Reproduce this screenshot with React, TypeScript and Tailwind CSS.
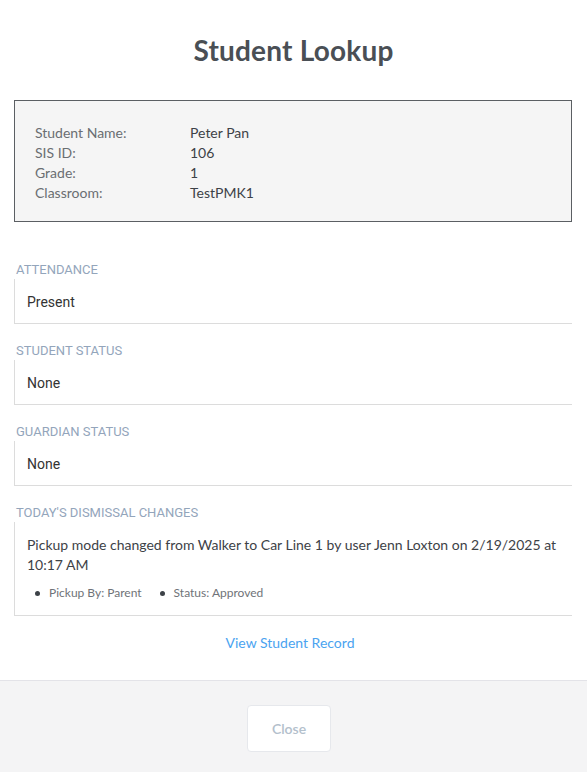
import React from "react";

const geo = "font-['Lato','Noto_Sans',sans-serif]";
const rob = "font-['Roboto','Liberation_Sans',sans-serif]";

const info = [
  { label: "Student Name:", value: "Peter Pan" },
  { label: "SIS ID:", value: "106" },
  { label: "Grade:", value: "1" },
  { label: "Classroom:", value: "TestPMK1" },
];

const Section = ({ title, children, first }: { title: string; children: React.ReactNode; first?: boolean }) => (
  <div className={first ? "mt-[40px]" : "mt-[19px]"}>
    <div className={`${rob} text-[13px] leading-[16px] uppercase text-[#93a5bb] pl-[2px]`}>{title}</div>
    <div className="mt-[1px] border-l border-b border-[#dcdcdc] pl-[12px] pr-[12px] pt-[13px] pb-[11px]">
      {children}
    </div>
  </div>
);

export default function App() {
  return (
    <div className={`w-[587px] min-h-[772px] bg-white flex flex-col ${geo}`}>
      <div className="h-[100px] flex items-center justify-center">
        <h1 className="text-[28px] leading-[36px] font-bold text-[#4a4f55] tracking-[0.2px]">Student Lookup</h1>
      </div>

      <div className="px-[14px] pr-[15px]">
        <div className="border border-[#5b5f63] bg-[#f5f5f5] pl-[20px] pt-[22px] pb-[18px]">
          {info.map((r) => (
            <div key={r.label} className="flex text-[14px] leading-[20px]">
              <div className="w-[155px] text-[#6a6e72]">{r.label}</div>
              <div className="text-[#3d4247]">{r.value}</div>
            </div>
          ))}
        </div>

        <Section title="Attendance" first>
          <div className={`${rob} text-[14px] leading-[20px] text-[#333]`}>Present</div>
        </Section>
        <Section title="Student Status">
          <div className={`${rob} text-[14px] leading-[20px] text-[#333]`}>None</div>
        </Section>
        <Section title="Guardian Status">
          <div className={`${rob} text-[14px] leading-[20px] text-[#333]`}>None</div>
        </Section>
        <Section title="Today's Dismissal Changes">
          <div>
            <p className="text-[14px] leading-[20px] text-[#3d4247]">
              Pickup mode changed from Walker to Car Line 1 by user Jenn Loxton on 2/19/2025 at 10:17 AM
            </p>
            <ul className="mt-[8px] mb-[1px] flex items-center pl-[8px] text-[12px] leading-[20px] text-[#6f7378]">
              <li className="flex items-center gap-[9px]">
                <span className="w-[5px] h-[5px] rounded-full bg-[#3d4247]" />
                Pickup By: Parent
              </li>
              <li className="flex items-center gap-[9px] ml-[18px]">
                <span className="w-[5px] h-[5px] rounded-full bg-[#3d4247]" />
                Status: Approved
              </li>
            </ul>
          </div>
        </Section>

        <div className="mt-[17px] mb-[27px] pr-[6px] text-center text-[14px] leading-[20px]">
          <a className="text-[#4aa3f0] cursor-pointer">View Student Record</a>
        </div>
      </div>

      <div className="flex-1 border-t border-[#e3e3e8] bg-[#f4f4f5] flex justify-center pt-[24px] pb-[20px] pr-[9px]">
        <button className="w-[84px] h-[47px] bg-white border border-[#e6e8ec] rounded-[4px] text-[14px] font-semibold text-[#b3c0cc]">
          Close
        </button>
      </div>
    </div>
  );
}
